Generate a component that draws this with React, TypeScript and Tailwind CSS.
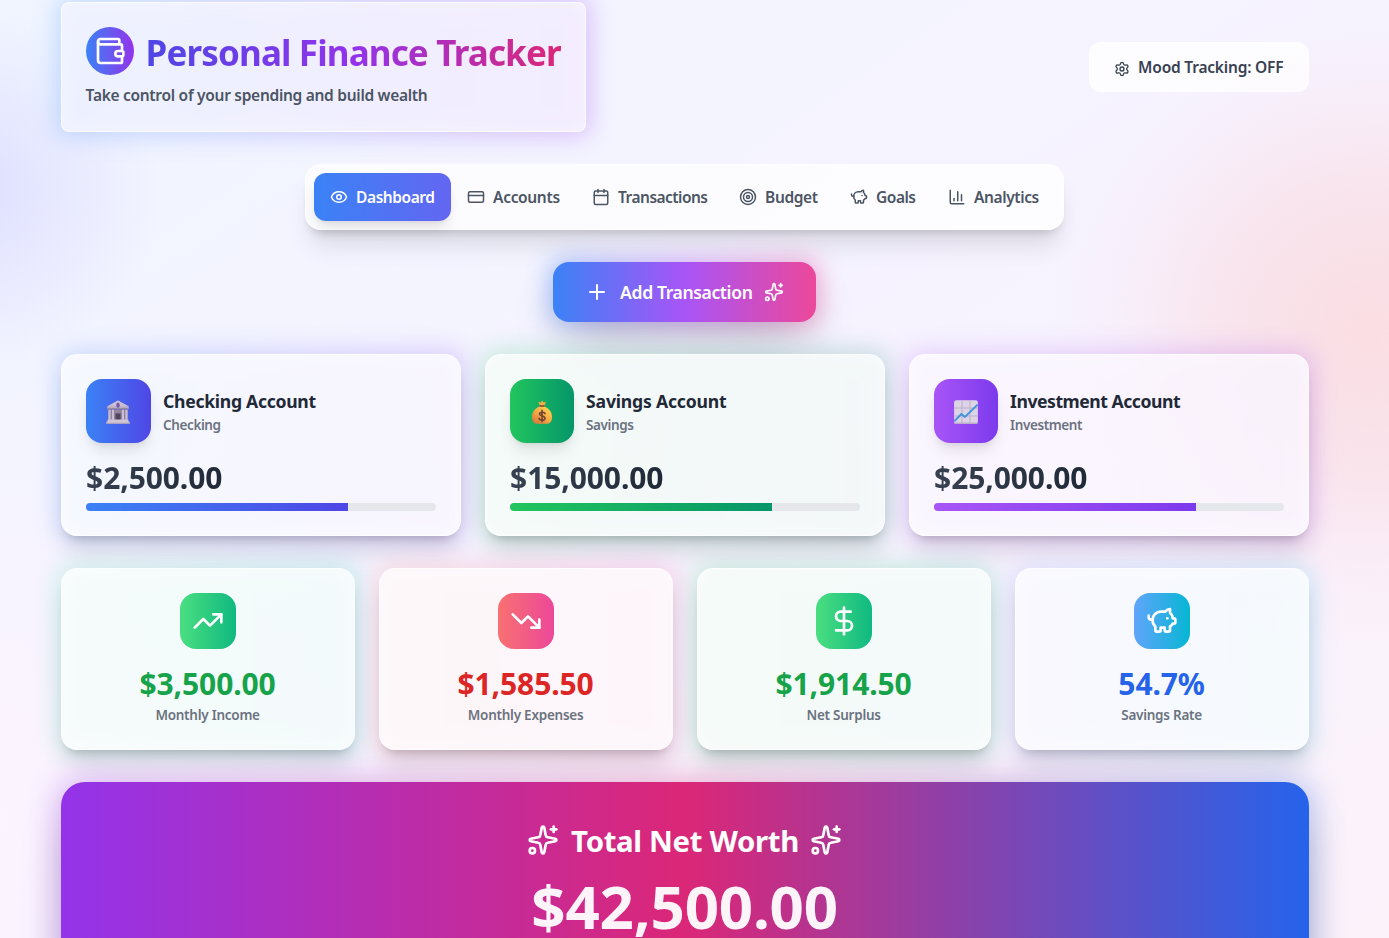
import type { ReactNode } from "react";
import {
  Calendar,
  ChartColumn,
  CreditCard,
  DollarSign,
  Eye,
  PiggyBank,
  Plus,
  Settings,
  Sparkles,
  Target,
  TrendingDown,
  TrendingUp,
  Wallet,
  type LucideIcon,
} from "lucide-react";

const navItems: { label: string; icon: LucideIcon; cls: string }[] = [
  { label: "Dashboard", icon: Eye, cls: "w-[137px] tracking-[-0.43px] bg-linear-to-r/srgb from-[#3b82f6] to-[#6366f1] text-white shadow-lg" },
  { label: "Accounts", icon: CreditCard, cls: "w-[125px] tracking-[-0.33px] text-[#4b5563]" },
  { label: "Transactions", icon: Calendar, cls: "w-[147px] tracking-[-0.53px] text-[#4b5563]" },
  { label: "Budget", icon: Target, cls: "w-[111px] tracking-[-0.38px] text-[#4b5563]" },
  { label: "Goals", icon: PiggyBank, cls: "w-[98px] tracking-[-0.5px] text-[#4b5563]" },
  { label: "Analytics", icon: ChartColumn, cls: "w-[123px] tracking-[-0.4px] text-[#4b5563]" },
];

function BankIcon() {
  return (
    <svg viewBox="0 0 24 24" className="size-6">
      <path d="M12 0.4 L22.8 6.4 V9 H1.2 V6.4 Z" fill="#b9abc4" />
      <path d="M12 0.4 L22.8 6.4 H1.2 Z" fill="#c9bfd3" />
      <path d="M1.2 8.2 H22.8 V9.6 H1.2 Z" fill="#8f819b" />
      <ellipse cx="12" cy="5.2" rx="1.7" ry="2.6" fill="#7c55a8" />
      <rect x="2.6" y="9.8" width="18.8" height="10.2" fill="#93859f" />
      <g fill="#cabfd2">
        <rect x="2.4" y="9.8" width="2.2" height="10" />
        <rect x="6" y="9.8" width="2" height="10" />
        <rect x="16" y="9.8" width="2" height="10" />
        <rect x="19.4" y="9.8" width="2.2" height="10" />
      </g>
      <rect x="9.4" y="13.4" width="5.2" height="6.6" fill="#50465f" />
      <path d="M1.6 19.6 H22.4 V21.6 H23.6 V23.8 H0.4 V21.6 H1.6 Z" fill="#cfc5d6" />
      <path d="M0.4 22.8 H23.6 V23.8 H0.4 Z" fill="#aa9eb4" />
    </svg>
  );
}

function MoneyBagIcon() {
  return (
    <svg viewBox="0 0 24 24" className="size-6">
      <defs>
        <linearGradient id="bag" x1="1" y1="0" x2="0.2" y2="1">
          <stop offset="0" stopColor="#ffdc55" />
          <stop offset="0.55" stopColor="#f7ab45" />
          <stop offset="1" stopColor="#d97a3c" />
        </linearGradient>
      </defs>
      <path d="M8.2 1.8 L10.8 2.4 L12.2 0.4 L13.6 2.4 L16 1.8 L14.6 5.6 H9.8 Z" fill="#f3b045" />
      <path d="M9.5 6.4 C4.2 8.8 2 12.4 2 17 C2 21.6 4.2 23.8 7 23.8 H17 C20 23.8 22 21.4 22 17 C22 12.4 19.6 8.8 14.6 6.4 Z" fill="url(#bag)" />
      <rect x="9.4" y="4.9" width="5.3" height="2" rx="0.9" fill="#9a5a3c" />
      <path d="M14.9 13.6 C14.6 12.1 9.5 11.5 9.5 14.1 C9.5 16.5 15 15.6 15 18.2 C15 21 9.3 20.4 9.1 18.4 M12.1 10.4 V21.8" fill="none" stroke="#6f4434" strokeWidth="1.6" strokeLinecap="round" />
    </svg>
  );
}

function ChartIcon() {
  return (
    <svg viewBox="0 0 24 24" className="size-6">
      <rect x="0.1" y="0.2" width="23.8" height="23.7" rx="2.2" fill="#dcd3e6" />
      <path d="M8 0.4 V23.8 M16 0.4 V23.8 M0.2 8 H23.8 M0.2 16 H23.8" stroke="#bdb0cb" strokeWidth="1" />
      <path d="M0.5 23.2 H23.5" stroke="#b3a5c4" strokeWidth="1.2" />
      <path d="M0.4 21.2 L7.4 14 L11 16.9 L23.6 4.6" fill="none" stroke="#3b94dc" strokeWidth="1.9" strokeLinejoin="round" />
    </svg>
  );
}

const accounts = [
  { name: "Checking Account", type: "Checking", amount: "$2,500.00", icon: <BankIcon />, box: "w-[65px] from-[#3b82f6] to-[#4f46e5]", fill: "from-[#3b82f6] to-[#4f46e5]", glow: "from-[#3b82f6] to-[#7c3aed]", nameCls: "tracking-[-0.3px]" },
  { name: "Savings Account", type: "Savings", amount: "$15,000.00", icon: <MoneyBagIcon />, box: "w-16 from-[#22c55e] to-[#059669]", fill: "from-[#22c55e] to-[#059669]", glow: "from-[#22c55e] to-[#0f766e]", nameCls: "tracking-[-0.2px]" },
  { name: "Investment Account", type: "Investment", amount: "$25,000.00", icon: <ChartIcon />, box: "w-16 from-[#a855f7] to-[#7c3aed]", fill: "from-[#a855f7] to-[#7c3aed]", glow: "from-[#a855f7] to-[#9333ea]", nameCls: "tracking-[-0.47px]" },
];

const stats: { label: string; value: string; icon: LucideIcon; color: string; box: string; glow: string }[] = [
  { label: "Monthly Income", value: "$3,500.00", icon: TrendingUp, color: "text-[#16a34a]", box: "from-[#4ade80] to-[#10b981]", glow: "from-[#34d399] to-[#14b8a6]" },
  { label: "Monthly Expenses", value: "$1,585.50", icon: TrendingDown, color: "text-[#dc2626]", box: "from-[#f87171] to-[#ec4899]", glow: "from-[#f87171] to-[#ec4899]" },
  { label: "Net Surplus", value: "$1,914.50", icon: DollarSign, color: "text-[#16a34a]", box: "from-[#4ade80] to-[#10b981]", glow: "from-[#22c55e] to-[#10b981]" },
  { label: "Savings Rate", value: "54.7%", icon: PiggyBank, color: "text-[#2563eb]", box: "from-[#60a5fa] to-[#06b6d4]", glow: "from-[#818cf8] to-[#22b8e0]" },
];

function GlowCard({ glow, children, className = "" }: { glow: string; children: ReactNode; className?: string }) {
  return (
    <div className="relative">
      <div className={`absolute -inset-1 rounded-2xl bg-linear-to-r/srgb opacity-[0.22] blur-md ${glow}`} />
      <div
        className={`relative h-[182px] rounded-2xl border border-white/60 bg-white/80 p-6 shadow-[0_20px_25px_-5px_rgba(0,0,0,0.1),0_8px_10px_-6px_rgba(0,0,0,0.18)] ${className}`}
      >
        {children}
      </div>
    </div>
  );
}

export default function App() {
  return (
    <div className="relative h-[938px] overflow-hidden bg-linear-to-br/srgb from-[#f0f5ff] via-[#f6f3ff] to-[#fcf2fa] font-['Noto_Sans',sans-serif] font-semibold">
      <div className="absolute top-[10px] -left-[200px] size-[360px] rounded-full bg-[radial-gradient(closest-side,rgba(165,160,255,0.24),rgba(165,160,255,0.12)_50%,rgba(165,160,255,0))]" />
      <div className="absolute top-[420px] -left-[420px] size-[800px] rounded-full bg-[radial-gradient(closest-side,rgba(253,244,255,0.9),rgba(253,244,255,0))]" />
      <div className="absolute top-[10px] -right-[300px] size-[640px] rounded-full bg-[radial-gradient(closest-side,rgba(252,200,200,0.5),rgba(251,205,210,0.38)_45%,rgba(252,215,230,0.14)_78%,rgba(250,220,235,0))]" />

      <div className="relative ml-[60.6px] w-[1248px] pt-[2px]">
        <header className="flex items-center justify-between">
          <div className="relative">
            <div className="absolute -inset-1 rounded-lg bg-linear-to-r/srgb from-[#60a5fa] to-[#a855f7] opacity-[0.34] blur-md" />
            <div className="relative h-[130px] w-[525px] rounded-lg border border-white/70 bg-[#f9f8ff]/80 p-6">
              <div className="flex items-center gap-3">
                <div className="flex size-12 shrink-0 items-center justify-center rounded-full bg-linear-to-r/srgb from-[#3b82f6] to-[#9333ea]">
                  <Wallet className="size-8 text-white" />
                </div>
                <h1 className="bg-linear-to-r/srgb from-[#4f46e5] via-[#9333ea] to-[#db2777] bg-clip-text pt-[4px] text-[35px] leading-[42px] font-bold tracking-[-0.86px] whitespace-nowrap text-transparent">
                  Personal Finance Tracker
                </h1>
              </div>
              <p className="mt-2 text-[15.5px] leading-6 tracking-[-0.29px] text-[#4b5563]">Take control of your spending and build wealth</p>
            </div>
          </div>
          <button className="flex h-[50px] w-[220px] items-center rounded-xl border border-white/60 bg-white/75 pl-6 text-[15.5px] tracking-[-0.2px] text-[#374151]">
            <Settings className="mt-[3px] mr-[8.5px] size-4" />
            <span className="pt-px">Mood Tracking: OFF</span>
          </button>
        </header>

        <nav className="mx-auto mt-8 flex h-[66px] w-[759px] rounded-2xl border border-white/60 bg-white/75 p-2 shadow-[0_20px_25px_-5px_rgba(0,0,0,0.11),0_8px_10px_-6px_rgba(0,0,0,0.16)]">
          {navItems.map(({ label, icon: Icon, cls }) => (
            <button key={label} className={`flex h-12 items-center gap-2 rounded-xl pl-4 text-[15.5px] ${cls}`}>
              <Icon className="size-[18px] shrink-0" />
              <span className="pt-px">{label}</span>
            </button>
          ))}
        </nav>

        <div className="mt-8 flex justify-center">
          <div className="relative">
            <div className="absolute -inset-1 rounded-2xl bg-linear-to-r/srgb from-[#3b82f6] via-[#a855f7] to-[#ec4899] opacity-40 blur-md" />
            <button className="relative flex h-[60px] w-[263px] items-center rounded-2xl bg-linear-to-r/srgb from-[#3b82f6] via-[#a855f7] to-[#ec4899] px-8 text-[17.6px] tracking-[-0.4px] text-white shadow-2xl">
              <Plus className="size-6 shrink-0" />
              <span className="ml-[11px] w-[132px] shrink-0 text-left whitespace-nowrap">Add Transaction</span>
              <Sparkles className="ml-3 size-5 shrink-0" />
            </button>
          </div>
        </div>

        <section className="mt-8 grid grid-cols-3 gap-6">
          {accounts.map((a) => (
            <GlowCard key={a.name} glow={a.glow}>
              <div className="flex items-center gap-3">
                <div className={`flex h-16 items-center justify-center rounded-2xl bg-linear-to-r/srgb pt-0.5 shadow-lg ${a.box}`}>{a.icon}</div>
                <div className="pl-[0.5px]">
                  <h3 className={`text-[17.6px] leading-7 font-bold text-[#1f2937] ${a.nameCls}`}>{a.name}</h3>
                  <p className="text-[13.5px] leading-5 tracking-[-0.4px] text-[#6b7280]">{a.type}</p>
                </div>
              </div>
              <p className="mt-[17px] w-fit bg-linear-to-r/srgb from-[#374151] to-[#1f2937] bg-clip-text pl-[0.5px] text-[30px] leading-[35px] font-bold tracking-[-0.1px] text-transparent">
                {a.amount}
              </p>
              <div className="mt-2 h-2 overflow-hidden rounded-full bg-[#e5e7eb]">
                <div className={`h-full w-3/4 bg-linear-to-r/srgb ${a.fill}`} />
              </div>
            </GlowCard>
          ))}
        </section>

        <section className="mt-8 grid grid-cols-4 gap-6">
          {stats.map(({ label, value, icon: Icon, color, box, glow }) => (
            <GlowCard key={label} glow={glow} className="flex flex-col items-center">
              <div className={`flex size-14 items-center justify-center rounded-2xl bg-linear-to-r/srgb ${box}`}>
                <Icon className="size-8 text-white" />
              </div>
              <p className={`mt-[17px] text-[30px] leading-[35px] font-bold tracking-[-0.1px] ${color}`}>{value}</p>
              <p className="mt-1 text-[13.5px] leading-5 tracking-[-0.25px] text-[#6b7280]">{label}</p>
            </GlowCard>
          ))}
        </section>

        <section className="relative mt-8">
          <div className="absolute -inset-1 rounded-3xl bg-linear-to-r/srgb from-[#9333ea] via-[#db2777] to-[#2563eb] opacity-30 blur-lg" />
          <div className="relative h-[240px] rounded-3xl bg-linear-to-r/srgb from-[#9333ea] via-[#db2777] to-[#2563eb] pt-10 text-white shadow-2xl">
            <div className="flex items-center justify-center gap-3">
              <Sparkles className="size-8" />
              <h2 className="w-[227px] pt-[2px] text-[29.4px] leading-[34px] font-bold tracking-[-0.35px] whitespace-nowrap">Total Net Worth</h2>
              <Sparkles className="size-8" />
            </div>
            <p className="mt-[18px] text-center text-[60px] leading-[60px] font-bold tracking-[-0.2px] text-white/95">$42,500.00</p>
          </div>
        </section>
      </div>
    </div>
  );
}
